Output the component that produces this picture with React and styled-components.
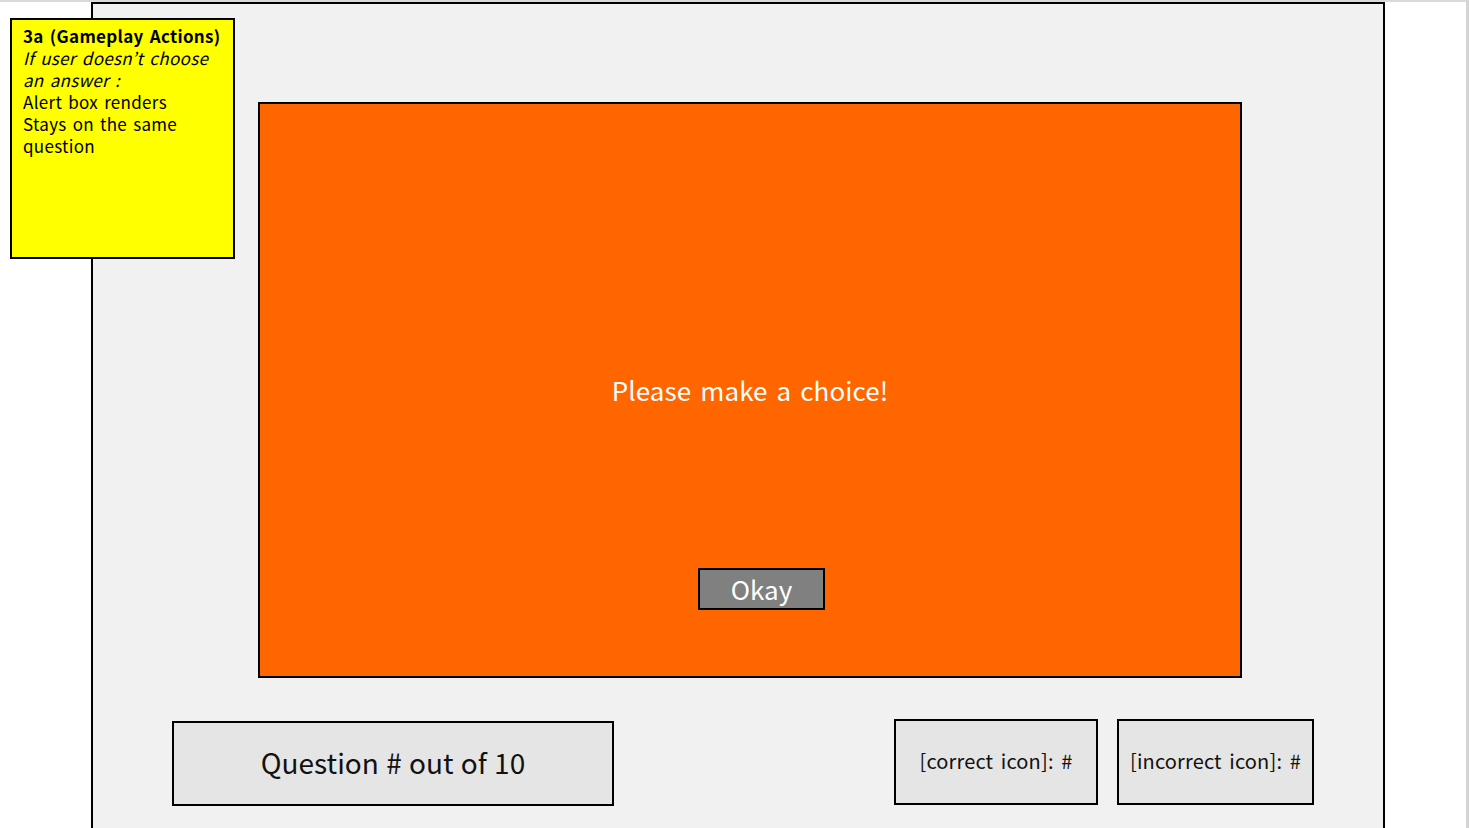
import React from "react";
import styled, { createGlobalStyle } from "styled-components";

const Global = createGlobalStyle`
  html, body { margin: 0; padding: 0; background: #ffffff; }
  body { font-family: "Noto Sans CJK KR", "Noto Sans", sans-serif; overflow: hidden; }
`;

const Page = styled.div`
  position: relative;
  width: 1469px;
  height: 828px;
  box-sizing: border-box;
  border-top: 2px solid #d9d9d9;
  border-right: 3px solid #d4d4d4;
  overflow: hidden;
  background: #ffffff;
`;

const Frame = styled.div`
  margin-left: 91px;
  width: 1294px;
  height: 830px;
  box-sizing: border-box;
  border: 2px solid #000;
  background: #f1f1f1;
  display: flex;
  flex-direction: column;
`;

const Dialog = styled.div`
  margin: 98px 0 0 165px;
  width: 984px;
  height: 576px;
  box-sizing: border-box;
  border: 2px solid #000;
  background: #ff6600;
  display: flex;
  flex-direction: column;
  align-items: center;
  padding-top: 268px;
`;

const Message = styled.div`
  color: #ffffff;
  font-size: 26px;
  line-height: 36px;
  height: 36px;
  word-spacing: 3px;
  letter-spacing: 0.1px;
`;

const OkayButton = styled.button`
  margin-top: 160px;
  margin-left: 23px;
  width: 127px;
  height: 42px;
  box-sizing: border-box;
  border: 2px solid #000;
  background: #808080;
  color: #ffffff;
  font-family: inherit;
  font-size: 26px;
  line-height: 36px;
  padding: 0;
  cursor: pointer;
`;

const BottomRow = styled.div`
  display: flex;
  justify-content: space-between;
  align-items: flex-start;
  margin-top: 41px;
  padding: 0 69px 0 79px;
`;

const Box = styled.div`
  box-sizing: border-box;
  border: 2px solid #000;
  background: #e5e5e5;
  display: flex;
  align-items: center;
  justify-content: center;
  color: #111;
  width: ${(p) => p.$w}px;
  height: ${(p) => p.$h}px;
  margin-top: ${(p) => p.$top || 0}px;
  padding-bottom: ${(p) => p.$pb || 0}px;
  font-size: ${(p) => p.$fs}px;
  word-spacing: ${(p) => p.$ws || 0}px;
  letter-spacing: ${(p) => p.$ls || 0}px;
`;

const Stats = styled.div`
  display: flex;
  gap: 19px;
`;

const Sticky = styled.div`
  position: absolute;
  left: 10px;
  top: 16px;
  width: 225px;
  height: 241px;
  box-sizing: border-box;
  border: 2px solid #000;
  background: #ffff00;
  padding: 5px 0 0 11px;
  font-size: 17px;
  line-height: 22px;
  color: #000;
  letter-spacing: 0.3px;
  word-spacing: 2px;
`;

const NoteLine = styled.div`
  font-weight: ${(p) => (p.$bold ? 700 : 400)};
  font-style: ${(p) => (p.$italic ? "italic" : "normal")};
  height: 22px;
  white-space: nowrap;
`;

export default function App() {
  return (
    <>
      <Global />
      <Page>
        <Frame>
          <Dialog>
            <Message>Please make a choice!</Message>
            <OkayButton>Okay</OkayButton>
          </Dialog>
          <BottomRow>
            <Box $w={442} $h={85} $fs={28} $top={2} $ws={1} $pb={4}>Question # out of 10</Box>
            <Stats>
              <Box $w={204} $h={86} $fs={20} $ws={3} $ls={0.15} $pb={3}>[correct icon]: #</Box>
              <Box $w={197} $h={86} $fs={20} $ws={3} $ls={0.15} $pb={3}>[incorrect icon]: #</Box>
            </Stats>
          </BottomRow>
        </Frame>
        <Sticky>
          <NoteLine $bold>3a (Gameplay Actions)</NoteLine>
          <NoteLine $italic>If user doesn’t choose</NoteLine>
          <NoteLine $italic>an answer :</NoteLine>
          <NoteLine>Alert box renders</NoteLine>
          <NoteLine>Stays on the same</NoteLine>
          <NoteLine>question</NoteLine>
        </Sticky>
      </Page>
    </>
  );
}
